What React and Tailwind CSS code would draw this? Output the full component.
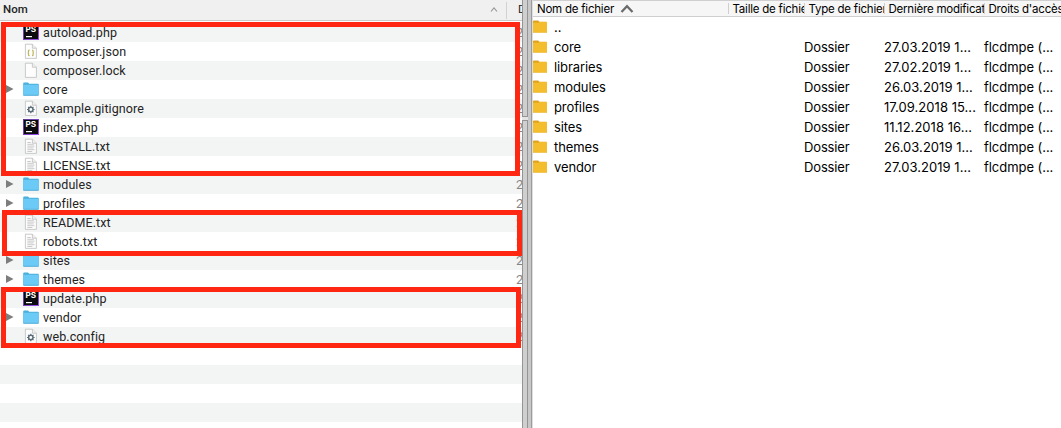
import React from "react";

const localFiles = [
  { name: "autoload.php", kind: "php" },
  { name: "composer.json", kind: "json" },
  { name: "composer.lock", kind: "blank" },
  { name: "core", kind: "folder" },
  { name: "example.gitignore", kind: "gear" },
  { name: "index.php", kind: "php" },
  { name: "INSTALL.txt", kind: "text" },
  { name: "LICENSE.txt", kind: "text" },
  { name: "modules", kind: "folder" },
  { name: "profiles", kind: "folder" },
  { name: "README.txt", kind: "text" },
  { name: "robots.txt", kind: "text" },
  { name: "sites", kind: "folder" },
  { name: "themes", kind: "folder" },
  { name: "update.php", kind: "php" },
  { name: "vendor", kind: "folder" },
  { name: "web.config", kind: "gear" },
  null,
  null,
  null,
  null,
  null,
];

const remoteFiles = [
  { name: ".." },
  { name: "core", date: "27.03.2019 1..." },
  { name: "libraries", date: "27.02.2019 1..." },
  { name: "modules", date: "26.03.2019 1..." },
  { name: "profiles", date: "17.09.2018 15..." },
  { name: "sites", date: "11.12.2018 16..." },
  { name: "themes", date: "26.03.2019 1..." },
  { name: "vendor", date: "27.03.2019 1..." },
];

function Page({ children }) {
  return (
    <svg className="mb-px h-4 w-4 shrink-0" viewBox="0 0 16 16">
      <path d="M2.4 1.2h7l4 4v10.2h-11z" fill="#fdfdfd" stroke="#bcbcbc" strokeWidth="0.8" />
      <path d="M9.4 1.2v4h4" fill="#f2f2f2" stroke="#bcbcbc" strokeWidth="0.8" />
      {children}
    </svg>
  );
}

function FileIcon({ kind }) {
  if (kind === "folder") {
    return (
      <svg className="mb-px h-4 w-4 shrink-0" viewBox="0 0 16 16">
        <path d="M0.2 14V2.6Q0.2 1.6 1.2 1.6H5l1.2 1.2h8.7q0.9 0 0.9 0.9V14z" fill="#4aafd9" />
        <path d="M0.2 3.8h15.6v10q0 0.7-0.7 0.7H0.9q-0.7 0-0.7-0.7z" fill="#6ccaf6" />
        <path d="M0.4 14.3h15.2" stroke="#48a5cf" strokeWidth="0.8" />
      </svg>
    );
  }
  if (kind === "php") {
    return (
      <svg className="mb-px h-4 w-4 shrink-0" viewBox="0 0 16 16">
        <defs>
          <linearGradient id="edge" x1="0" y1="0" x2="1" y2="1">
            <stop offset="0" stopColor="#5d3a8c" />
            <stop offset="1" stopColor="#9a4cf0" />
          </linearGradient>
        </defs>
        <rect width="16" height="16" fill="url(#edge)" />
        <rect x="1" y="1" width="14" height="14" fill="#0b0a0e" />
        <text x="2.4" y="8.3" fontSize="7.4" fontWeight="700" fill="#fff" fontFamily="Inter, sans-serif" textLength="10.6" lengthAdjust="spacingAndGlyphs">PS</text>
        <rect x="3" y="12" width="6" height="1.2" fill="#fff" />
      </svg>
    );
  }
  if (kind === "json") {
    return (
      <Page>
        <path d="M6.6 7q-1.1 0-1.1 1v1q0 .8-.8.8.8 0 .8.8v1.1q0 1 1.1 1M9 7q1.1 0 1.1 1v1q0 .8.8.8-.8 0-.8.8v1.1q0 1-1.1 1" fill="none" stroke="#bdb45a" strokeWidth="1.2" />
      </Page>
    );
  }
  if (kind === "gear") {
    return (
      <Page>
        <circle cx="7.8" cy="9.5" r="2.2" fill="none" stroke="#5b6d79" strokeWidth="1.5" />
        <path d="M7.8 5.7v1.4M7.8 11.9v1.4M4 9.5h1.4M10.2 9.5h1.4M5.1 6.8l1 1M9.5 11.2l1 1M5.1 12.2l1-1M9.5 7.8l1-1" stroke="#5b6d79" strokeWidth="1.1" />
      </Page>
    );
  }
  if (kind === "text") {
    return (
      <Page>
        <path d="M4.3 4.5h3.5M4.3 6.3h6.5M4.3 8.1h7.2M4.3 9.9h6.3M4.3 11.7h7.2M4.3 13.5h5" stroke="#bcbcbc" strokeWidth="0.8" />
      </Page>
    );
  }
  return <Page />;
}

function LocalRow({ file, striped }) {
  return (
    <div className={"flex h-[19px] shrink-0 items-center " + (striped ? "bg-[#f3f5f5]" : "bg-white")}>
      {file && (
        <>
          <div className="w-[23px] shrink-0 pb-px pl-1.5">
            {file.kind === "folder" && (
              <svg className="h-2.5 w-2" viewBox="0 0 8 10">
                <path d="M0 1l7.5 4L0 9z" fill="#7d7d7d" />
              </svg>
            )}
          </div>
          <FileIcon kind={file.kind} />
          <span className="w-[477px] shrink-0 pt-0.5 pl-1 tracking-[0.08px]">{file.name}</span>
          <span className="pt-px text-[13px] text-[#858585]">2</span>
        </>
      )}
    </div>
  );
}

function LocalPane() {
  return (
    <section className="relative h-full w-[522px] shrink-0 overflow-hidden bg-white font-[Roboto,sans-serif] text-[12.5px] whitespace-nowrap text-[#242424]">
      <div className="flex h-[21px] items-center border-b border-[#c9c9c9] bg-[#f0f0f0] text-[11.5px] font-medium">
        <span className="w-[490px] shrink-0 pl-[3px]">Nom</span>
        <svg className="h-2 w-2 shrink-0" viewBox="0 0 8 8">
          <path d="M1 5.5l3-3.6 3 3.6" fill="none" stroke="#969696" strokeWidth="1.1" />
        </svg>
        <span className="ml-2 h-[17px] w-px shrink-0 bg-[#d2d2d2]" />
        <span className="pl-[11px] font-normal">Date</span>
      </div>
      <div className="flex flex-col pt-0.5">
        {localFiles.map((file, i) => (
          <LocalRow key={i} file={file} striped={i % 2 === 0} />
        ))}
      </div>
      <div className="absolute top-[22px] left-px h-[154px] w-[519px] border-5 border-[#ff2612]" />
      <div className="absolute top-[210px] left-0.5 h-[46px] w-[520px] border-5 border-[#ff2612]" />
      <div className="absolute top-[287px] left-px h-[61px] w-[520px] border-5 border-[#ff2612]" />
    </section>
  );
}

function Splitter() {
  return (
    <div className="flex h-full w-[11px] shrink-0 bg-[#c9c9c9]">
      <div className="flex w-1.5 flex-col">
        <div className="h-[117px] border-x border-b border-[#949494] bg-[#cfcfcf]" />
        <div className="h-[3px] bg-[#e4e4e4]" />
        <div className="flex-1 border-x border-t border-[#949494] bg-[#cfcfcf]" />
      </div>
      <div className="w-[3px] bg-[#c8c8c8]" />
      <div className="w-px bg-[#9c9c9c]" />
      <div className="w-px bg-[#dedede]" />
    </div>
  );
}

function Heading({ width, children }) {
  return (
    <div className={"flex h-full shrink-0 items-center overflow-hidden " + width}>
      <span className="h-[11px] w-px shrink-0 bg-[#cfcfcf]" />
      <span className="pt-0.5 pl-[3.5px]">{children}</span>
    </div>
  );
}

function RemotePane() {
  return (
    <section className="h-full min-w-0 flex-1 overflow-hidden bg-white font-[Inter,sans-serif] text-[13px] whitespace-nowrap text-black">
      <div className="flex h-[17px] items-center border-y border-[#cfcfcf] bg-[#f6f6f6] text-[11.5px] tracking-[-0.22px]">
        <div className="flex w-[195px] shrink-0 items-center gap-1.5 pl-1">
          <span className="pt-0.5">Nom de fichier</span>
          <svg className="h-3 w-3.5" viewBox="0 0 14 12">
            <path d="M1.5 9L7 3.2 12.5 9" fill="none" stroke="#6a6a6a" strokeWidth="2.2" />
          </svg>
        </div>
        <Heading width="w-[76px]">Taille de fichier</Heading>
        <Heading width="w-[80px]">Type de fichier</Heading>
        <Heading width="w-[100px]">Dernière modification</Heading>
        <Heading width="w-[77px]">Droits d'accès</Heading>
      </div>
      <div className="flex flex-col">
        {remoteFiles.map((file) => (
          <div key={file.name} className="flex h-5 items-center">
            <svg className="mb-0.5 h-[13px] w-3.5 shrink-0" viewBox="0 0 14 13">
              <path d="M0 1.2Q0 .4.8.4h4.4l1.3 1.4h6.7q.8 0 .8.8V12.5H0z" fill="#dfa41d" />
              <path d="M0 2.8h5.2l1.3-.7H14v10.4H0z" fill="#f3bd2d" />
            </svg>
            <span className="w-[257px] shrink-0 pt-0.5 pl-[7px] tracking-[-0.1px]">{file.name}</span>
            {file.date && (
              <>
                <span className="w-20 shrink-0 pt-0.5 tracking-[-0.15px]">Dossier</span>
                <span className="w-[100px] shrink-0 pt-0.5 tracking-[0.04px]">{file.date}</span>
                <span className="pt-0.5 tracking-[-0.05px]">flcdmpe (...</span>
              </>
            )}
          </div>
        ))}
      </div>
    </section>
  );
}

export default function App() {
  return (
    <main className="flex h-screen w-full overflow-hidden bg-white">
      <LocalPane />
      <Splitter />
      <RemotePane />
    </main>
  );
}
